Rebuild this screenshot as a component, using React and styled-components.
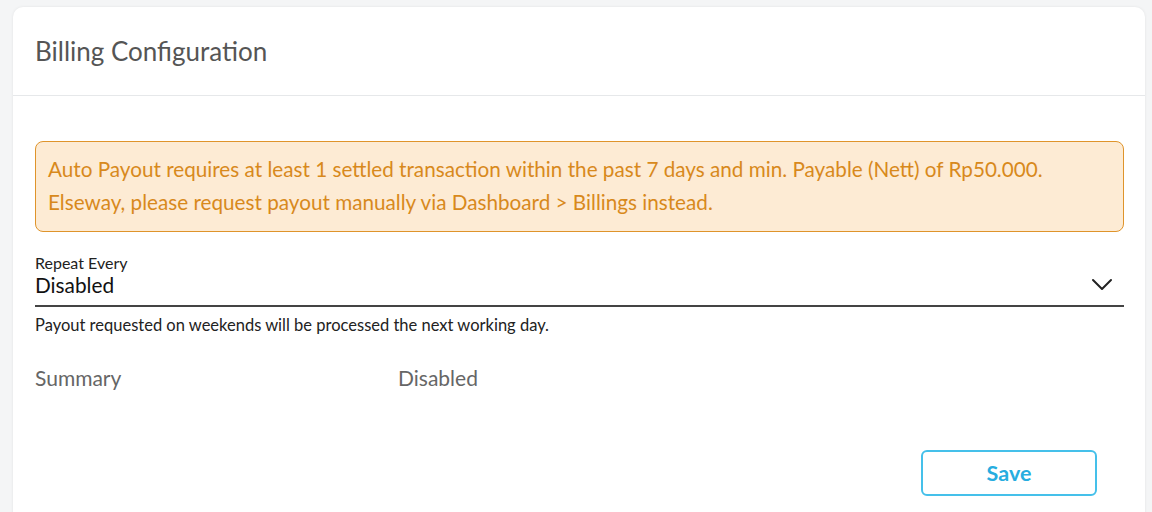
import React, { useState } from 'react';
import styled, { createGlobalStyle } from 'styled-components';

const GlobalStyle = createGlobalStyle`
  body {
    margin: 0;
    background: #f4f5f6;
    font-family: 'Lato', 'Liberation Sans', sans-serif;
  }
`;

const Page = styled.div`
  padding: 7px 7px 0 13px;
  height: 512px;
  box-sizing: border-box;
  overflow: hidden;
`;

const Card = styled.div`
  background: #fff;
  border-radius: 10px 10px 0 0;
  box-shadow: 0 0 3px rgba(0, 0, 0, 0.08);
  height: 540px;
`;

const Header = styled.div`
  height: 88px;
  display: flex;
  align-items: center;
  padding: 0 22px;
  border-bottom: 1px solid #e6e8ea;
  color: #555;
  font-size: 26px;
`;

const Body = styled.div`
  padding: 45px 21px 0 22px;
  display: flex;
  flex-direction: column;
`;

const Alert = styled.div`
  background: #fdebd4;
  border: 1px solid #df942b;
  border-radius: 8px;
  padding: 11px 12px 12px;
  color: #d8891c;
  font-size: 20.7px;
  line-height: 33px;
`;

const Field = styled.div`
  margin-top: 21px;
  display: flex;
  flex-direction: column;
  border-bottom: 2px solid #444;
  padding-bottom: 7px;
  cursor: pointer;
`;

const Label = styled.div`
  font-size: 16px;
  color: #222;
  line-height: 19px;
`;

const SelectRow = styled.div`
  display: flex;
  align-items: center;
  justify-content: space-between;
  font-size: 20.8px;
  color: #111;
  line-height: 26px;
`;

const Chevron = styled.svg`
  width: 22px;
  height: 14px;
  margin-right: 11px;
`;

const Hint = styled.div`
  margin-top: 8px;
  font-size: 16.5px;
  color: #222;
`;

const SummaryRow = styled.div`
  display: grid;
  grid-template-columns: 363px 1fr;
  margin-top: 30px;
  font-size: 21px;
  color: #666;
`;

const Actions = styled.div`
  display: flex;
  justify-content: flex-end;
  margin-top: 60px;
  padding-right: 27px;
`;

const SaveButton = styled.button`
  width: 176px;
  height: 46px;
  border: 2px solid #45c0ea;
  border-radius: 6px;
  background: #fff;
  color: #27ade0;
  font-family: inherit;
  font-weight: 700;
  font-size: 21.5px;
  cursor: pointer;
`;

export default function App() {
  const [repeat] = useState('Disabled');

  return (
    <>
      <GlobalStyle />
      <Page>
        <Card>
          <Header>Billing Configuration</Header>
          <Body>
            <Alert>
              Auto Payout requires at least 1 settled transaction within the past 7 days and min. Payable (Nett) of Rp50.000.
              <br />
              Elseway, please request payout manually via Dashboard &gt; Billings instead.
            </Alert>
            <Field>
              <Label>Repeat Every</Label>
              <SelectRow>
                <span>{repeat}</span>
                <Chevron viewBox="0 0 22 14" fill="none">
                  <path d="M2 2l9 9 9-9" stroke="#222" strokeWidth="2" strokeLinecap="round" strokeLinejoin="round" />
                </Chevron>
              </SelectRow>
            </Field>
            <Hint>Payout requested on weekends will be processed the next working day.</Hint>
            <SummaryRow>
              <span>Summary</span>
              <span>{repeat}</span>
            </SummaryRow>
            <Actions>
              <SaveButton>Save</SaveButton>
            </Actions>
          </Body>
        </Card>
      </Page>
    </>
  );
}
